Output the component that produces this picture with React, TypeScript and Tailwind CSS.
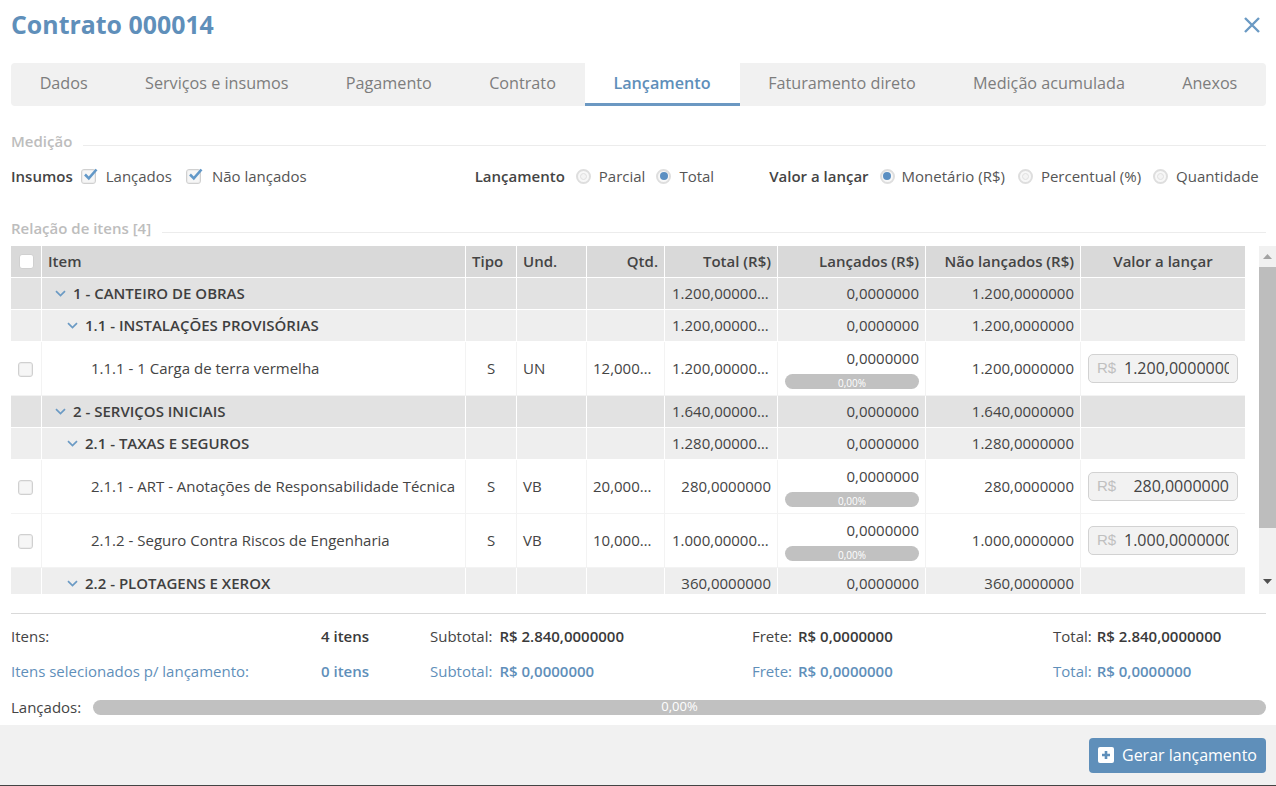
import React from "react";

const BLUE = "text-[#5f8fba]";
const Chevron = ({ className = "" }: { className?: string }) => (
  <svg width="11" height="7" viewBox="0 0 11 7" className={className}>
    <path d="M1 1.2 L5.5 5.6 L10 1.2" fill="none" stroke="#6b9ac4" strokeWidth="1.7" />
  </svg>
);

const Check = ({ checked = false }: { checked?: boolean }) => (
  <span className="relative inline-block w-[15px] h-[15px] rounded-[3px] border border-[#d0d0d0] bg-[#f6f6f6] shadow-[inset_0_0_0_1px_#ececec] shrink-0">
    {checked && (
      <svg width="17" height="15" viewBox="0 0 17 15" className="absolute left-[0px] top-[-3px]">
        <path d="M3 7.5 L6.8 11.3 L14.5 2.5" fill="none" stroke="#6298c8" strokeWidth="2.6" />
      </svg>
    )}
  </span>
);

const Radio = ({ on = false }: { on?: boolean }) => (
  <span className="flex items-center justify-center w-[15px] h-[15px] rounded-full border-2 border-[#dedede] bg-[#f8f8f8] shrink-0">
    <span className={on ? "w-[8px] h-[8px] rounded-full bg-[#5b8fc2]" : "w-[7px] h-[7px] rounded-full border border-[#e0e0e0] bg-[#f4f4f4]"} />
  </span>
);

const Section = ({ title, className = "" }: { title: string; className?: string }) => (
  <div className={`flex items-start h-[20px] ${className}`}>
    <span className="text-[15px] leading-[19px] font-semibold text-[#bdbdbd] whitespace-nowrap">{title}</span>
    <span className="flex-1 ml-[11px] mt-[13px] h-px bg-[#ececec]" />
  </div>
);

const Bar = () => (
  <div className="h-[15px] w-[134px] ml-[1px] rounded-[8px] bg-[#c1c1c1] text-center text-[10px] leading-[18px] text-white">0,00%</div>
);

const td = "border border-white px-[6px] text-[15px] text-[#444] overflow-hidden whitespace-nowrap";

type Row =
  | { kind: "g1" | "g2"; label: string; total: string; nao: string }
  | { kind: "item"; label: string; tipo: string; und: string; qtd: string; total: string; nao: string; val: string };

const rows: Row[] = [
  { kind: "g1", label: "1 - CANTEIRO DE OBRAS", total: "1.200,00000…", nao: "1.200,0000000" },
  { kind: "g2", label: "1.1 - INSTALAÇÕES PROVISÓRIAS", total: "1.200,00000…", nao: "1.200,0000000" },
  { kind: "item", label: "1.1.1 - 1 Carga de terra vermelha", tipo: "S", und: "UN", qtd: "12,000…", total: "1.200,00000…", nao: "1.200,0000000", val: "1.200,0000000" },
  { kind: "g1", label: "2 - SERVIÇOS INICIAIS", total: "1.640,00000…", nao: "1.640,0000000" },
  { kind: "g2", label: "2.1 - TAXAS E SEGUROS", total: "1.280,00000…", nao: "1.280,0000000" },
  { kind: "item", label: "2.1.1 - ART - Anotações de Responsabilidade Técnica", tipo: "S", und: "VB", qtd: "20,000…", total: "280,0000000", nao: "280,0000000", val: "280,0000000" },
  { kind: "item", label: "2.1.2 - Seguro Contra Riscos de Engenharia", tipo: "S", und: "VB", qtd: "10,000…", total: "1.000,00000…", nao: "1.000,0000000", val: "1.000,0000000" },
  { kind: "g2", label: "2.2 - PLOTAGENS E XEROX", total: "360,0000000", nao: "360,0000000" },
];

const align = (s: string) => (s.endsWith("…") ? "text-left pl-[7px]" : "text-right");

const TableRow = ({ r }: { r: Row }) => {
  if (r.kind === "item") {
    const cell = "border border-[#f3f3f3] text-[15px] text-[#444] whitespace-nowrap overflow-hidden pt-[1px]";
    return (
      <tr className="h-[54px] bg-white">
        <td className="border border-[#f3f3f3] border-l-white text-center align-middle">
          <span className="flex justify-center pt-[2px] pr-[1px]"><Check /></span>
        </td>
        <td className={`${cell} pl-[49px]`}>{r.label}</td>
        <td className={`${cell} text-center`}>{r.tipo}</td>
        <td className={`${cell} px-[6px]`}>{r.und}</td>
        <td className={`${cell} px-[6px] text-left`}>{r.qtd}</td>
        <td className={`${cell} px-[6px] ${align(r.total)}`}>{r.total}</td>
        <td className={`${cell} px-[6px] text-right align-top`}>
          <div className="h-[22px] mt-[4px] leading-[22px]">0,0000000</div>
          <div className="mt-[5px]"><Bar /></div>
        </td>
        <td className={`${cell} px-[6px] text-right`}>{r.nao}</td>
        <td className="border border-[#f3f3f3] border-r-white px-[7px]">
          <div className="flex items-center h-[29px] rounded-[5px] border border-[#d2d2d2] bg-[#f2f2f2] pl-[8px] pr-[8px] overflow-hidden">
            <span className="font-['Liberation_Sans',sans-serif] text-[15px] text-[#c0c0c0] shrink-0 mr-[8px]">R$</span>
            <span className="flex-1 min-w-0 overflow-hidden text-[16px] text-[#444] whitespace-nowrap flex justify-end">
              <span className={r.val.length > 11 ? "block w-[105px] overflow-hidden text-left shrink-0" : ""}>{r.val}</span>
            </span>
          </div>
        </td>
      </tr>
    );
  }
  const g1 = r.kind === "g1";
  return (
    <tr className={g1 ? "h-[32px] bg-[#e2e2e2]" : "h-[32px] bg-[#eeeeee]"}>
      <td className={td} />
      <td className={td}>
        <span className={`flex items-center font-semibold text-[#3f3f3f] ${g1 ? "pl-[7px]" : "pl-[19px]"}`}>
          <Chevron className="mr-[7px] mt-[1px]" />
          {r.label}
        </span>
      </td>
      <td className={td} />
      <td className={td} />
      <td className={td} />
      <td className={`${td} ${align(r.total)}`}>{r.total}</td>
      <td className={`${td} text-right`}>0,0000000</td>
      <td className={`${td} text-right`}>{r.nao}</td>
      <td className={td} />
    </tr>
  );
};

const th = "border border-white border-t-0 px-[6px] text-[15px] font-semibold text-[#444] whitespace-nowrap";

const Summary = ({ blue, label, items, sub, frete, total }: { blue?: boolean; label: string; items: string; sub: string; frete: string; total: string }) => {
  const c = blue ? BLUE : "text-[#444]";
  const v = blue ? BLUE : "text-[#3a3a3a]";
  return (
    <div className={`flex h-[35px] items-center text-[15px] ${c}`}>
      <span className="w-[310px]">{label}</span>
      <span className={`w-[109px] font-semibold ${v}`}>{items}</span>
      <span className="w-[322px] flex"><span className="mr-[7px]">Subtotal:</span><span className={`font-semibold ${v}`}>{sub}</span></span>
      <span className="w-[301px] flex"><span className="mr-[6px]">Frete:</span><span className={`font-semibold ${v}`}>{frete}</span></span>
      <span className="flex"><span className="mr-[5px]">Total:</span><span className={`font-semibold ${v}`}>{total}</span></span>
    </div>
  );
};

export default function App() {
  const tabs = ["Dados", "Serviços e insumos", "Pagamento", "Contrato", "Lançamento", "Faturamento direto", "Medição acumulada", "Anexos"];
  return (
    <div className="w-[1276px] h-[786px] overflow-hidden bg-white font-['Open_Sans',sans-serif] flex flex-col border-b border-[#444]">
      <div className="flex-1 pl-[11px] pr-[10px] min-h-0">
        <div className="flex items-center justify-between h-[63px] pb-[14px]">
          <h1 className={`text-[24.9px] font-bold ${BLUE}`}>Contrato 000014</h1>
          <svg width="18" height="18" viewBox="0 0 18 18" className="mr-[5px]">
            <path d="M2 2 L16 16 M16 2 L2 16" stroke="#6b9ac4" strokeWidth="2.4" fill="none" />
          </svg>
        </div>

        <div className="flex h-[43px] rounded-[4px] bg-[#f1f1f1] text-[16.2px]">
          {tabs.map((t) =>
            t === "Lançamento" ? (
              <span key={t} className={`w-[155px] justify-center flex items-center font-semibold bg-white border-b-[3px] border-[#6b98c2] ${BLUE}`}>{t}</span>
            ) : (
              <span key={t} className="flex-auto justify-center pb-[3px] flex items-center text-[#7d7d7d]">{t}</span>
            ),
          )}
        </div>

        <Section title="Medição" className="mt-[26px]" />

        <div className="flex items-center h-[22px] mt-[13px] text-[15px] text-[#555] whitespace-nowrap">
          <span className="font-semibold text-[#444] mr-[8px]">Insumos</span>
          <Check checked />
          <span className="ml-[10px] mr-[14px]">Lançados</span>
          <Check checked />
          <span className="ml-[11px] mr-[168px]">Não lançados</span>
          <span className="font-semibold text-[#444] mr-[11px]">Lançamento</span>
          <Radio />
          <span className="ml-[8px] mr-[11px]">Parcial</span>
          <Radio on />
          <span className="ml-[8px] mr-[55px]">Total</span>
          <span className="font-semibold text-[#444] mr-[11px]">Valor a lançar</span>
          <Radio on />
          <span className="ml-[7px] mr-[13px]">Monetário (R$)</span>
          <Radio />
          <span className="ml-[8px] mr-[12px]">Percentual (%)</span>
          <Radio />
          <span className="ml-[8px]">Quantidade</span>
        </div>

        <Section title="Relação de itens [4]" className="mt-[32px]" />

        <div className="flex mt-[7px] h-[348px] -mr-[10px]">
          <div className="w-[1234px] shrink-0 overflow-hidden">
            <table className="w-[1235px] -ml-[1px] table-fixed border-collapse">
              <colgroup>
                <col className="w-[31px]" />
                <col className="w-[424px]" />
                <col className="w-[51px]" />
                <col className="w-[70px]" />
                <col className="w-[78px]" />
                <col className="w-[113px]" />
                <col className="w-[148px]" />
                <col className="w-[155px]" />
                <col className="w-[165px]" />
              </colgroup>
              <thead>
                <tr className="h-[31px] bg-[#d9d9d9]">
                  <th className={th}><span className="flex justify-center"><span className="w-[15px] h-[15px] rounded-[3px] border border-[#d0d0d0] bg-white" /></span></th>
                  <th className={`${th} text-left`}>Item</th>
                  <th className={`${th} text-left`}>Tipo</th>
                  <th className={`${th} text-left`}>Und.</th>
                  <th className={`${th} text-right`}>Qtd.</th>
                  <th className={`${th} text-right`}>Total (R$)</th>
                  <th className={`${th} text-right`}>Lançados (R$)</th>
                  <th className={`${th} text-right`}>Não lançados (R$)</th>
                  <th className={`${th} text-center`}>Valor a lançar</th>
                </tr>
              </thead>
              <tbody>
                {rows.map((r) => <TableRow key={r.label} r={r} />)}
              </tbody>
            </table>
          </div>
          <div className="ml-[14px] w-[17px] bg-[#f1f1f1] flex flex-col shrink-0">
            <div className="h-[21px] flex items-center justify-center">
              <svg width="9" height="5" viewBox="0 0 9 5"><path d="M0 5 L4.5 0 L9 5 Z" fill="#a3a3a3" /></svg>
            </div>
            <div className="h-[261px] bg-[#bdbdbd]" />
            <div className="flex-1 flex items-end justify-center pb-[10px]">
              <svg width="9" height="5" viewBox="0 0 9 5"><path d="M0 0 L4.5 5 L9 0 Z" fill="#505050" /></svg>
            </div>
          </div>
        </div>

        <div className="mt-[19px] h-px bg-[#d9d9d9]" />
        <div className="pt-[5px]">
          <Summary label="Itens:" items="4 itens" sub="R$ 2.840,0000000" frete="R$ 0,0000000" total="R$ 2.840,0000000" />
          <Summary blue label="Itens selecionados p/ lançamento:" items="0 itens" sub="R$ 0,0000000" frete="R$ 0,0000000" total="R$ 0,0000000" />
        </div>
        <div className="flex items-center h-[28px] mt-[4px] text-[15px] text-[#444]">
          <span className="w-[82px]">Lançados:</span>
          <div className="flex-1 h-[15px] rounded-[8px] bg-[#c1c1c1] text-center text-[13px] leading-[13px] text-white">0,00%</div>
        </div>
      </div>

      <div className="h-[60px] bg-[#f1f1f1] flex items-start justify-end px-[10px] pt-[13px] shrink-0">
        <button className="flex items-center h-[35px] w-[177px] rounded-[4px] bg-[#5f8fba] text-white text-[16px] pl-[9px] pb-[1px]">
          <svg width="16" height="16" viewBox="0 0 16 16" className="mr-[8px]">
            <rect x="0" y="0" width="16" height="16" rx="2" fill="#fff" />
            <path d="M8 4 V12 M4 8 H12" stroke="#5f8fba" strokeWidth="2.6" />
          </svg>
          Gerar lançamento
        </button>
      </div>
    </div>
  );
}
